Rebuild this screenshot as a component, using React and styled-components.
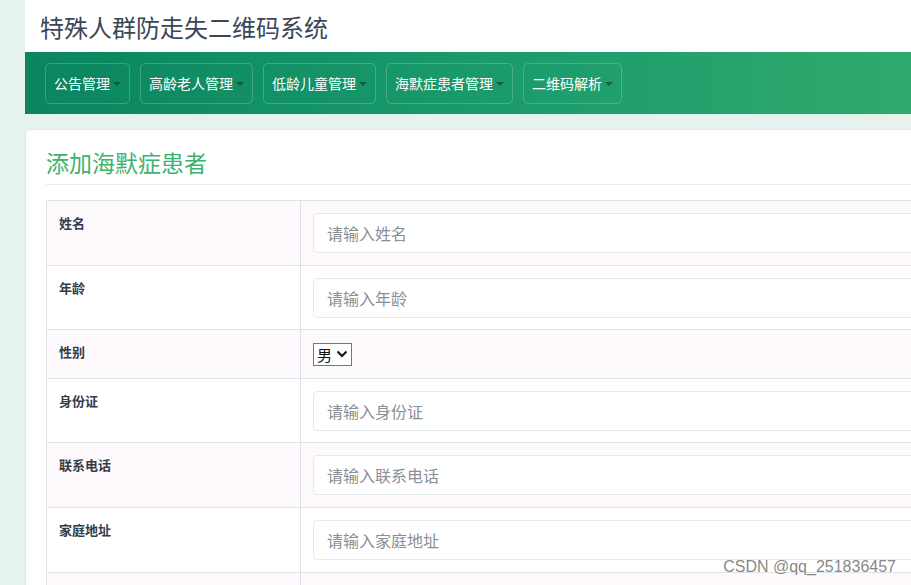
import React from 'react'
import styled, { createGlobalStyle } from 'styled-components'

const GlobalStyle = createGlobalStyle`
  html, body {
    margin: 0;
    padding: 0;
    background: #e6f2ee;
    overflow: hidden;
    font-family: "Microsoft YaHei", "Noto Sans CJK SC", sans-serif;
  }
`

const Page = styled.div`
  margin-left: 25px;
  width: 1100px;
  min-height: 585px;
`

const Header = styled.div`
  background: #fff;
  height: 52px;
  display: flex;
  align-items: center;
  padding-left: 15px;
  h1 {
    margin: 0;
    font-size: 24px;
    font-weight: normal;
    color: #3b4656;
  }
`

const NavBar = styled.div`
  height: 62px;
  background: linear-gradient(90deg, #0a8560 0%, #1c9c6c 45%, #2fa96c 80%, #33ab6d 100%);
  display: flex;
  align-items: center;
  gap: 10px;
  padding-left: 20px;
  box-sizing: border-box;
`

const NavButton = styled.div`
  height: 41px;
  box-sizing: border-box;
  padding: 0 8px;
  border: 1px solid rgba(255, 255, 255, 0.2);
  border-radius: 5px;
  display: flex;
  align-items: center;
  color: #fff;
  font-size: 14px;
  gap: 3px;
`

const Caret = styled.span`
  width: 0;
  height: 0;
  border-left: 4px solid transparent;
  border-right: 4px solid transparent;
  border-top: 4px solid rgba(0, 50, 30, 0.55);
  margin-top: 1px;
`

const Card = styled.div`
  margin-top: 15px;
  background: #fff;
  border: 1px solid #dfe8e6;
  border-radius: 4px 0 0 0;
  padding: 16px 20px 0 20px;
  box-sizing: border-box;
`

const Title = styled.h2`
  margin: 0;
  font-size: 23px;
  font-weight: normal;
  color: #3cb371;
  padding-bottom: 6px;
  border-bottom: 1px solid #e8ecec;
  line-height: 32px;
`

const Table = styled.table`
  margin-top: 15px;
  border-collapse: collapse;
  table-layout: fixed;
  width: 100%;
`

const Row = styled.tr`
  background: ${p => (p.$odd ? '#fdf9fd' : '#fff')};
  height: ${p => p.$h}px;
  td {
    border: 1px solid #dde3e6;
    vertical-align: top;
  }
`

const Label = styled.td`
  padding: 12px 12px 0;
  font-size: 13px;
  font-weight: bold;
  color: #333c48;
`

const Field = styled.td`
  padding: ${p => (p.$select ? '13px 12px 0' : '12px 12px 10px')};
`

const Input = styled.input`
  display: block;
  width: 100%;
  height: 40px;
  box-sizing: border-box;
  border: 1px solid #e3ecec;
  border-radius: 4px;
  padding: 0 13px;
  font-size: 16px;
  font-family: inherit;
  background: #fff;
  outline: none;
  &::placeholder {
    color: #8a8f96;
  }
`

const SelectWrap = styled.div`
  position: relative;
  width: max-content;
`

const Select = styled.select`
  appearance: none;
  display: block;
  width: 39px;
  height: 23px;
  box-sizing: border-box;
  font-size: 15px;
  font-family: inherit;
  border: 1px solid #767676;
  border-radius: 0;
  background: #fff;
  color: #111;
  padding: 0 0 0 3px;
  line-height: 21px;
`

const Chevron = styled.svg`
  position: absolute;
  right: 4px;
  top: 7px;
  pointer-events: none;
`

const Watermark = styled.div`
  position: absolute;
  right: 15px;
  bottom: 9px;
  font-family: "Liberation Sans", Arial, sans-serif;
  font-size: 16px;
  color: rgba(120, 120, 120, 0.9);
`

const menus = ['公告管理', '高龄老人管理', '低龄儿童管理', '海默症患者管理', '二维码解析']

const fields = [
  { label: '姓名', ph: '请输入姓名', h: 65 },
  { label: '年龄', ph: '请输入年龄', h: 64 },
  { label: '性别', select: true, h: 49 },
  { label: '身份证', ph: '请输入身份证', h: 64 },
  { label: '联系电话', ph: '请输入联系电话', h: 65 },
  { label: '家庭地址', ph: '请输入家庭地址', h: 65 },
  { label: '', ph: '', h: 65 },
]

export default function App() {
  return (
    <>
      <GlobalStyle />
      <Page>
        <Header>
          <h1>特殊人群防走失二维码系统</h1>
        </Header>
        <NavBar>
          {menus.map(m => (
            <NavButton key={m}>
              {m}
              <Caret />
            </NavButton>
          ))}
        </NavBar>
        <Card>
          <Title>添加海默症患者</Title>
          <Table>
            <colgroup>
              <col style={{ width: 254 }} />
              <col />
            </colgroup>
            <tbody>
              {fields.map((f, i) => (
                <Row key={i} $odd={i % 2 === 0} $h={f.h}>
                  <Label>{f.label}</Label>
                  <Field $select={f.select}>
                    {f.select ? (
                      <SelectWrap>
                        <Select defaultValue="男">
                          <option>男</option>
                          <option>女</option>
                        </Select>
                        <Chevron width="12" height="8" viewBox="0 0 12 8">
                          <path d="M1.5 1.5 L6 6 L10.5 1.5" fill="none" stroke="#111" strokeWidth="2" />
                        </Chevron>
                      </SelectWrap>
                    ) : (
                      <Input placeholder={f.ph} />
                    )}
                  </Field>
                </Row>
              ))}
            </tbody>
          </Table>
        </Card>
      </Page>
      <Watermark>CSDN @qq_251836457</Watermark>
    </>
  )
}
